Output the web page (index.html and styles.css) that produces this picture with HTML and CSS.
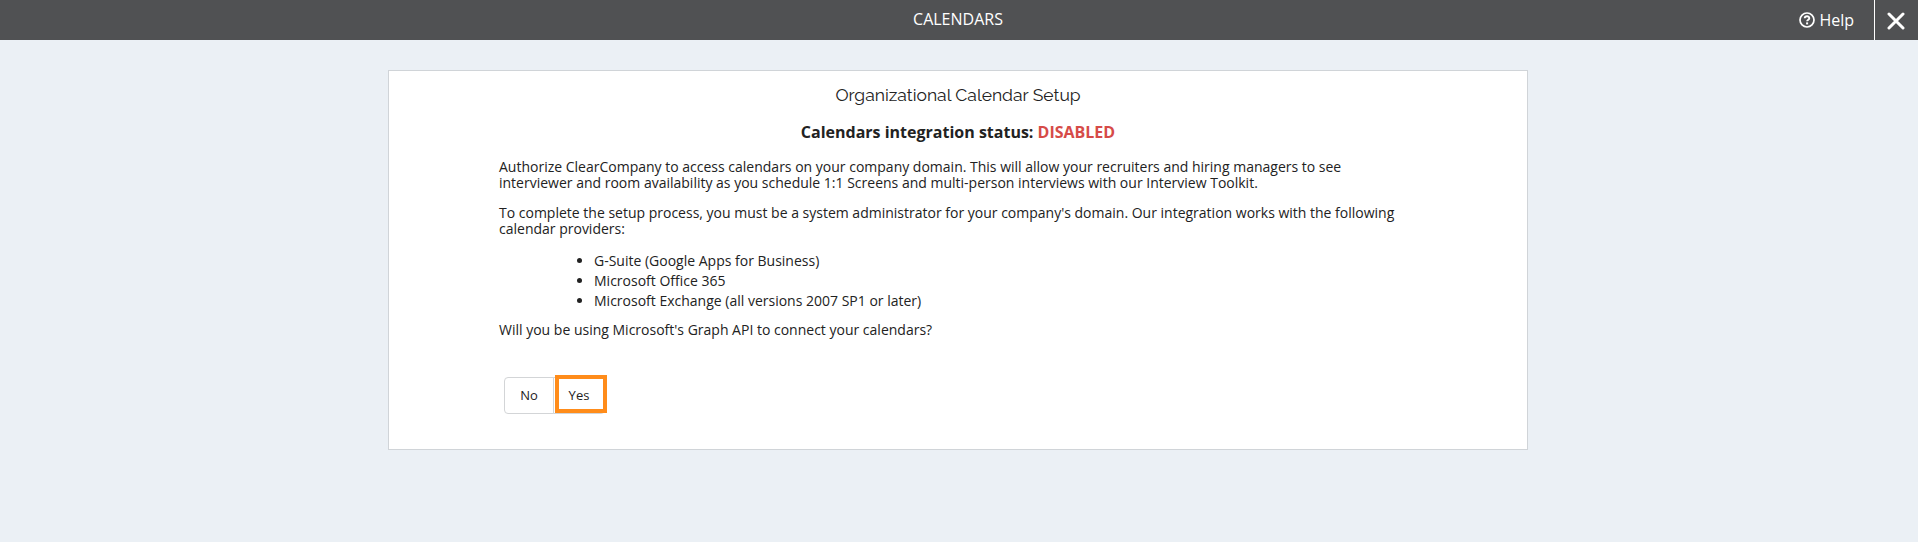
FILE: index.html
```html
<!DOCTYPE html>
<html lang="en">
<head>
    <meta charset="UTF-8">
    <meta name="viewport" content="width=device-width, initial-scale=1.0">
    <title>Calendars</title>
    <link rel="stylesheet" href="styles.css">
</head>
<body>
    <header class="top-bar">
        <h1 class="page-heading">CALENDARS</h1>
        <a class="help-link" href="#">
            <svg class="help-icon" viewBox="0 0 16 16" width="16" height="16">
                <circle cx="8" cy="8" r="7" fill="none" stroke="#fff" stroke-width="1.7"/>
                <path d="M5.7 6.3C5.8 3.5 10.3 3.5 10.3 6.2C10.3 7.7 8.1 7.7 8.1 9.3" fill="none" stroke="#fff" stroke-width="1.9"/>
                <rect x="7.1" y="10.4" width="2" height="2" fill="#fff"/>
            </svg>
            <span class="help-text">Help</span>
        </a>
        <a class="close-btn" href="#" aria-label="Close">
            <svg viewBox="0 0 18 18" width="18" height="18">
                <path d="M2 2L16 16M16 2L2 16" stroke="#fff" stroke-width="3" stroke-linecap="round"/>
            </svg>
        </a>
    </header>
    <main class="card">
        <h2 class="card-heading">Organizational Calendar Setup</h2>
        <h3 class="status">Calendars integration status: <span class="disabled">DISABLED</span></h3>
        <div class="card-content">
            <p>Authorize ClearCompany to access calendars on your company domain. This will allow your recruiters and hiring managers to see<br>interviewer and room availability as you schedule 1:1 Screens and multi-person interviews with our Interview Toolkit.</p>
            <p>To complete the setup process, you must be a system administrator for your company's domain. Our integration works with the following<br>calendar providers:</p>
            <ul class="providers">
                <li>G-Suite (Google Apps for Business)</li>
                <li>Microsoft Office 365</li>
                <li>Microsoft Exchange (all versions 2007 SP1 or later)</li>
            </ul>
            <p>Will you be using Microsoft's Graph API to connect your calendars?</p>
            <div class="btn-group">
                <button type="button" class="btn">No</button>
                <button type="button" class="btn btn-yes">Yes</button>
            </div>
        </div>
    </main>
</body>
</html>
```
FILE: styles.css
```css
*, *::after{
    box-sizing:border-box;
}

body{
    margin:0px;
    padding:0px;
    font-family:"Open Sans", sans-serif;
    font-size:14px;
    color:#222;
    background-color:#ebf0f5;
}

.top-bar{
    display:grid;
    grid-template-columns:1fr auto 1fr 44px;
    height:40px;
    padding-left:42px;
    background-color:#505153;
}

.top-bar a{
    color:#fff;
    text-decoration:none;
}

.page-heading{
    grid-column:2;
    margin:0px;
    font-size:16px;
    font-weight:400;
    line-height:39px;
    color:#fff;
}

.help-link{
    display:flex;
    justify-content:flex-end;
    align-items:center;
    gap:4px;
    padding-right:20px;
    font-size:16px;
}

.help-text{
    line-height:40px;
}

.close-btn{
    display:flex;
    align-items:center;
    justify-content:center;
    padding:1px 1px 0px 0px;
    border-left:1px solid #fff;
}

.card{
    width:1140px;
    height:380px;
    margin:30px auto 0px 388px;
    padding:12px 110px 0px;
    border:1px solid #d0d4d8;
    background-color:#fff;
}

.card-heading{
    margin:0px;
    font-family:Raleway, "Open Sans", sans-serif;
    font-size:17.5px;
    font-weight:400;
    line-height:24px;
    text-align:center;
}

.status{
    margin:15px 0px 17px;
    font-size:16px;
    font-weight:700;
    line-height:20px;
    text-align:center;
}

.disabled{
    color:#d64b48;
}

.card-content p{
    margin:0px 0px 14px;
    line-height:16px;
    white-space:nowrap;
}

.providers{
    margin:0px 0px 11px;
    padding-left:95px;
    line-height:20px;
}

.btn-group{
    display:flex;
    margin-top:39px;
    padding-left:5px;
}

.btn{
    height:37px;
    width:50px;
    padding:0px 0px 2px;
    border:1px solid #d3d5d7;
    border-radius:4px 0px 0px 4px;
    background-color:#fff;
    font-family:inherit;
    font-size:13px;
    color:#222;
}

.btn-yes{
    position:relative;
    width:52px;
    margin-left:-1px;
    border-radius:0px 4px 4px 0px;
}

.btn-yes::after{
    content:"";
    position:absolute;
    top:-3px;
    left:1px;
    width:52px;
    height:38px;
    border:4px solid #ff8c1a;
}
```
